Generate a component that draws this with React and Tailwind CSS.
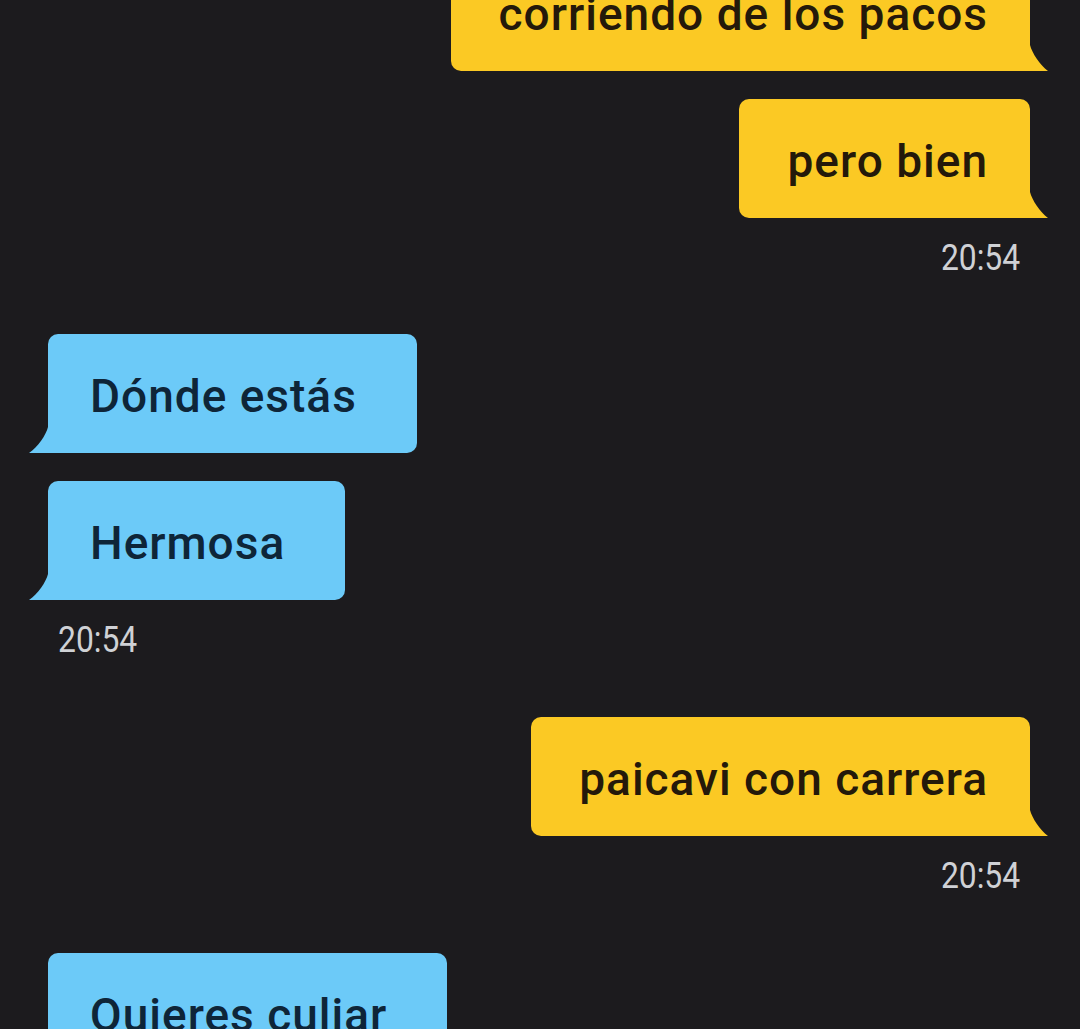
import React from "react";

function Tail({ side }) {
  if (side === "right") {
    return (
      <svg
        className="absolute bottom-0 right-[-18px] w-[18px] h-[26px]"
        viewBox="0 0 18 26"
      >
        <path d="M0 0 C2 8 10 20 18 26 L0 26 Z" fill="#fbc924" />
      </svg>
    );
  }
  return (
    <svg
      className="absolute bottom-0 left-[-19px] w-[19px] h-[26px]"
      viewBox="0 0 19 26"
    >
      <path d="M19 0 C17 8 9 20 0 26 L19 26 Z" fill="#6ccaf8" />
    </svg>
  );
}

function YellowBubble({ children }) {
  return (
    <div className="relative h-[119px] bg-[#fbc924] rounded-t-[10px] rounded-bl-[10px] pl-[48px] pr-[42px] pt-[34px] text-[46px] leading-[56px] font-medium tracking-[1px] text-[#24190a] whitespace-nowrap">
      {children}
      <Tail side="right" />
    </div>
  );
}

function BlueBubble({ children }) {
  return (
    <div className="relative h-[119px] bg-[#6ccaf8] rounded-t-[10px] rounded-br-[10px] pl-[42px] pr-[60px] pt-[34px] text-[46px] leading-[56px] font-medium tracking-[1px] text-[#0e2538] whitespace-nowrap">
      {children}
      <Tail side="left" />
    </div>
  );
}

function Time({ align }) {
  return (
    <div
      className={
        "mt-[22px] h-[36px] leading-[36px] flex " +
        (align === "right" ? "justify-end pr-[10px]" : "justify-start pl-[10px]")
      }
    >
      <span
        className={
          "inline-block text-[37px] text-[#cfd1d5] scale-x-[0.86] " +
          (align === "right" ? "origin-right" : "origin-left")
        }
      >
        20:54
      </span>
    </div>
  );
}

export default function App() {
  return (
    <div className="w-[1080px] h-[1029px] overflow-hidden bg-[#1c1b1e] font-['Roboto','Noto_Sans',sans-serif]">
      <div className="flex flex-col -mt-[48px]">
        <div className="flex flex-col items-end pr-[50px]">
          <div className="flex flex-col items-end gap-[28px]">
            <YellowBubble>corriendo de los pacos</YellowBubble>
            <YellowBubble>pero bien</YellowBubble>
          </div>
          <div className="self-stretch">
            <Time align="right" />
          </div>
        </div>

        <div className="mt-[58px] flex flex-col items-start pl-[48px]">
          <div className="flex flex-col items-start gap-[28px]">
            <BlueBubble>Dónde estás</BlueBubble>
            <BlueBubble>Hermosa</BlueBubble>
          </div>
          <div className="self-stretch">
            <Time align="left" />
          </div>
        </div>

        <div className="mt-[59px] flex flex-col items-end pr-[50px]">
          <div className="flex flex-col items-end gap-[28px]">
            <YellowBubble>paicavi con carrera</YellowBubble>
          </div>
          <div className="self-stretch">
            <Time align="right" />
          </div>
        </div>

        <div className="mt-[59px] flex flex-col items-start pl-[48px]">
          <div className="flex flex-col items-start gap-[28px]">
            <BlueBubble>Quieres culiar</BlueBubble>
          </div>
        </div>
      </div>
    </div>
  );
}
